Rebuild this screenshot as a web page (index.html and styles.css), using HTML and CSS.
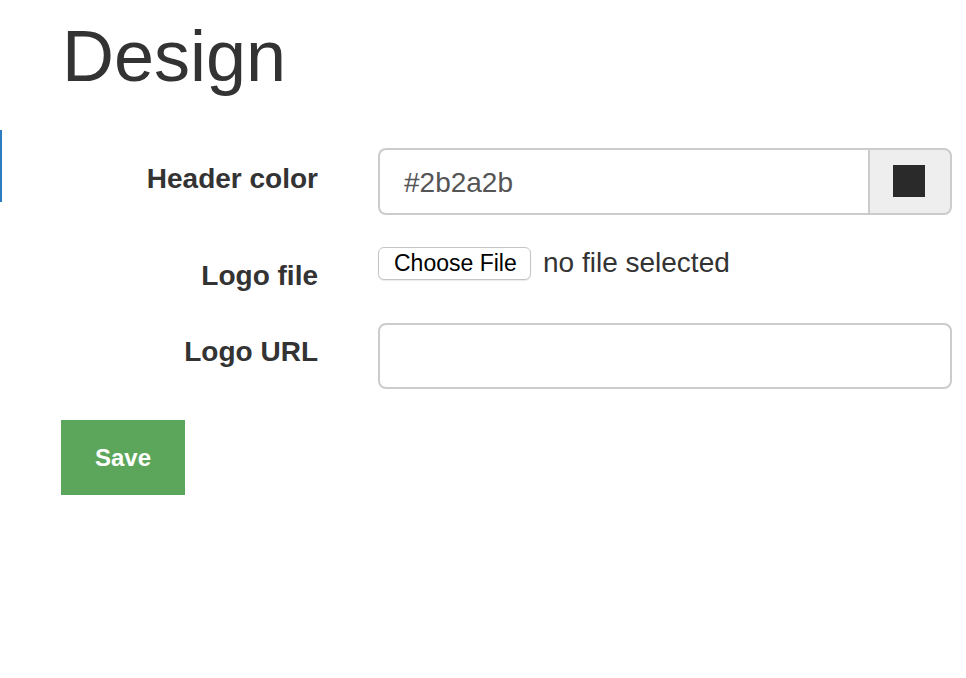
FILE: index.html
```html
<!DOCTYPE html>
<html lang="en">
<head>
<meta charset="utf-8">
<title>Design</title>
<link rel="stylesheet" href="styles.css">
</head>
<body>
<div class="edge"></div>
<main class="container">
  <h1 class="title">Design</h1>
  <form class="form">
    <div class="row row-color">
      <label class="label">Header color</label>
      <div class="control">
        <div class="input-group">
          <input class="input input-color" type="text" value="#2b2a2b">
          <span class="addon"><i class="swatch"></i></span>
        </div>
      </div>
    </div>
    <div class="row row-file">
      <label class="label">Logo file</label>
      <div class="control file-control">
        <span class="file-btn">Choose File</span>
        <span class="file-name">no file selected</span>
      </div>
    </div>
    <div class="row row-url">
      <label class="label">Logo URL</label>
      <div class="control">
        <input class="input input-url" type="text">
      </div>
    </div>
    <button type="button" class="btn-save">Save</button>
  </form>
</main>
</body>
</html>
```

FILE: styles.css
```css
html, body {
  margin: 0;
  padding: 0;
  background: #fff;
}

body {
  font-family: "Liberation Sans", Arial, Helvetica, sans-serif;
  color: #333;
  position: relative;
  min-height: 678px;
}

.edge {
  position: absolute;
  left: 0;
  top: 130px;
  width: 2px;
  height: 72px;
  background: #2d7cc0;
}

.container {
  padding: 0 14px 0 61px;
}

.title {
  margin: 17px 0 0 1px;
  font-size: 72px;
  line-height: 79px;
  font-weight: 400;
  color: #333;
}

.form {
  margin-top: 52px;
}

.row {
  display: grid;
  grid-template-columns: 257px 574px;
  column-gap: 60px;
  align-items: start;
}

.label {
  display: block;
  text-align: right;
  font-size: 28px;
  font-weight: 700;
  line-height: 40px;
  padding-top: 11px;
  color: #333;
}

.row-color {
  margin-bottom: 30px;
}

.row-file {
  margin-bottom: 30px;
}

.row-file .label {
  padding-top: 13px;
  line-height: 35px;
}

.row-url .label {
  padding-top: 9px;
}

.input-group {
  display: flex;
  height: 67px;
}

.input {
  box-sizing: border-box;
  border: 2px solid #ccc;
  border-radius: 8px;
  background: #fff;
  font-family: "Liberation Sans", Arial, Helvetica, sans-serif;
  font-size: 28px;
  color: #555;
  padding: 3px 24px 0;
  margin: 0;
  outline: none;
  width: 100%;
}

.input-color {
  flex: 1;
  height: 67px;
  border-right: 0;
  border-radius: 8px 0 0 8px;
}

.input-url {
  height: 66px;
  display: block;
}

.addon {
  box-sizing: border-box;
  width: 84px;
  height: 67px;
  border: 2px solid #ccc;
  border-radius: 0 8px 8px 0;
  background: #eee;
  display: flex;
  align-items: center;
  justify-content: center;
}

.swatch {
  display: block;
  width: 32px;
  height: 32px;
  background: #2b2a2b;
  margin: -1px 2px 0 0;
}

.file-control {
  display: flex;
  align-items: center;
  padding-top: 2px;
}

.file-btn {
  box-sizing: border-box;
  display: inline-flex;
  align-items: center;
  height: 33px;
  width: 153px;
  padding: 0 0 0 15px;
  border: 1px solid #c4c4c4;
  border-radius: 6px;
  background: #fff;
  box-shadow: 0 1px 1px rgba(0, 0, 0, 0.08);
  font-size: 23px;
  color: #000;
}

.file-name {
  margin-left: 12px;
  font-size: 28px;
  color: #333;
  position: relative;
  top: -1px;
}

.btn-save {
  display: block;
  margin-top: 31px;
  width: 124px;
  height: 75px;
  border: 0;
  border-radius: 0;
  background: #5ca65c;
  color: #fff;
  font-family: "Liberation Sans", Arial, Helvetica, sans-serif;
  font-size: 24px;
  font-weight: 700;
  padding: 0;
}
```
